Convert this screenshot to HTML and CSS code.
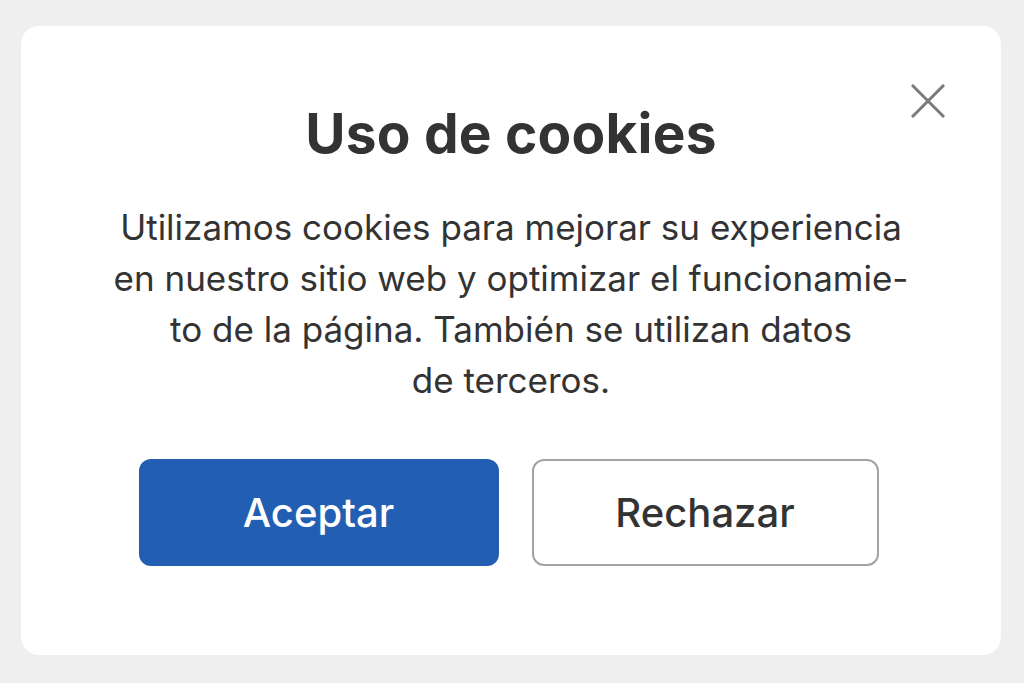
FILE: index.html
```html
<!DOCTYPE html>
<html lang="es">
<head>
<meta charset="utf-8">
<title>Uso de cookies</title>
<link rel="stylesheet" href="styles.css">
</head>
<body>
<div class="card">
  <button class="close" aria-label="Cerrar">
    <svg width="34" height="34" viewBox="0 0 34 34"><path d="M2 2 L32 32 M32 2 L2 32" stroke="#7b7b7b" stroke-width="3" stroke-linecap="square" fill="none"/></svg>
  </button>
  <h1 class="title">Uso de cookies</h1>
  <p class="text">Utilizamos cookies para mejorar su experiencia<br>en nuestro sitio web y optimizar el funcionamie-<br>to de la página. También se utilizan datos<br>de terceros.</p>
  <div class="actions">
    <button class="btn btn-primary">Aceptar</button>
    <button class="btn btn-secondary">Rechazar</button>
  </div>
</div>
</body>
</html>
```

FILE: styles.css
```css
html, body {
  margin: 0;
  padding: 0;
}
body {
  background: #efefef;
  width: 1024px;
  height: 683px;
  padding: 26px 23px 28px 21px;
  box-sizing: border-box;
  font-family: Inter, "Noto Sans", sans-serif;
}
.card {
  position: relative;
  background: #ffffff;
  border-radius: 18px;
  height: 100%;
  display: flex;
  flex-direction: column;
  align-items: center;
  box-sizing: border-box;
  padding-top: 74px;
}
.close {
  position: absolute;
  top: 58px;
  right: 56px;
  background: none;
  border: 0;
  padding: 0;
  width: 34px;
  height: 34px;
  display: flex;
}
.title {
  margin: 0;
  font-size: 55px;
  font-weight: 700;
  line-height: 66px;
  color: #333333;
  letter-spacing: 0.2px;
}
.text {
  margin: 36px 0 0;
  font-size: 35px;
  font-weight: 400;
  line-height: 51px;
  color: #333333;
  text-align: center;
}
.actions {
  display: flex;
  gap: 33px;
  margin-top: 53px;
  margin-right: 5px;
}
.btn {
  font-family: Inter, "Noto Sans", sans-serif;
  font-size: 40px;
  font-weight: 500;
  border-radius: 12px;
  height: 107px;
  box-sizing: border-box;
  cursor: pointer;
}
.btn-primary {
  width: 360px;
  background: #225fb3;
  color: #ffffff;
  border: 0;
}
.btn-secondary {
  width: 347px;
  background: #ffffff;
  color: #333333;
  border: 2px solid #a3a3a3;
}
```
